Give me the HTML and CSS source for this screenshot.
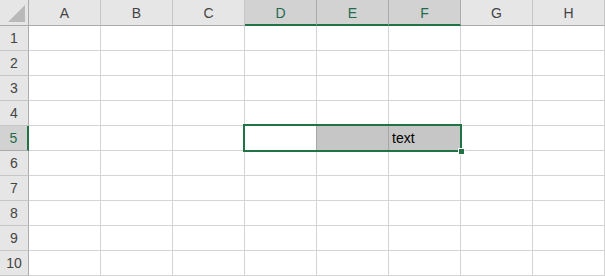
FILE: index.html
```html
<!DOCTYPE html>
<html>
  <head>
    <meta charset="UTF-8">
    <title>Sheet1</title>
    <link rel="stylesheet" href="styles.css">
  </head>
  <body>
    <div class="sheet">
      <div class="grid">
        <div class="corner"><span class="tri"></span></div>
        <div class="col-head">A</div>
        <div class="col-head">B</div>
        <div class="col-head">C</div>
        <div class="col-head sel">D</div>
        <div class="col-head sel">E</div>
        <div class="col-head sel">F</div>
        <div class="col-head">G</div>
        <div class="col-head">H</div>

        <div class="row-head">1</div>
        <div class="cell"></div><div class="cell"></div><div class="cell"></div><div class="cell"></div>
        <div class="cell"></div><div class="cell"></div><div class="cell"></div><div class="cell"></div>

        <div class="row-head">2</div>
        <div class="cell"></div><div class="cell"></div><div class="cell"></div><div class="cell"></div>
        <div class="cell"></div><div class="cell"></div><div class="cell"></div><div class="cell"></div>

        <div class="row-head">3</div>
        <div class="cell"></div><div class="cell"></div><div class="cell"></div><div class="cell"></div>
        <div class="cell"></div><div class="cell"></div><div class="cell"></div><div class="cell"></div>

        <div class="row-head">4</div>
        <div class="cell"></div><div class="cell"></div><div class="cell"></div><div class="cell"></div>
        <div class="cell"></div><div class="cell"></div><div class="cell"></div><div class="cell"></div>

        <!-- selected row: D5 active, E5:F5 filled -->
        <div class="row-head sel">5</div>
        <div class="cell"></div><div class="cell"></div><div class="cell"></div><div class="cell edge"></div>
        <div class="cell fill"></div><div class="cell fill">text</div><div class="cell"></div><div class="cell"></div>

        <div class="row-head">6</div>
        <div class="cell"></div><div class="cell"></div><div class="cell"></div><div class="cell"></div>
        <div class="cell"></div><div class="cell"></div><div class="cell"></div><div class="cell"></div>

        <div class="row-head">7</div>
        <div class="cell"></div><div class="cell"></div><div class="cell"></div><div class="cell"></div>
        <div class="cell"></div><div class="cell"></div><div class="cell"></div><div class="cell"></div>

        <div class="row-head">8</div>
        <div class="cell"></div><div class="cell"></div><div class="cell"></div><div class="cell"></div>
        <div class="cell"></div><div class="cell"></div><div class="cell"></div><div class="cell"></div>

        <div class="row-head">9</div>
        <div class="cell"></div><div class="cell"></div><div class="cell"></div><div class="cell"></div>
        <div class="cell"></div><div class="cell"></div><div class="cell"></div><div class="cell"></div>

        <div class="row-head">10</div>
        <div class="cell"></div><div class="cell"></div><div class="cell"></div><div class="cell"></div>
        <div class="cell"></div><div class="cell"></div><div class="cell"></div><div class="cell"></div>
      </div>
      <div class="selection"><span class="handle"></span></div>
    </div>
  </body>
</html>
```

FILE: styles.css
```css
body {
  margin: 0;
  background-color: #fff;
  font-family: "Liberation Sans", Arial, sans-serif;
  font-size: 14px;
  color: #333;
}
.sheet {
  position: relative;
  width: 605px;
  height: 276px;
  overflow: hidden;
}
.grid {
  display: grid;
  grid-template-columns: 29px repeat(8, 72px);
  grid-template-rows: 26px repeat(10, 25px);
}
.grid > div {
  box-sizing: border-box;
}
.corner {
  background-color: #e6e6e6;
  border-right: 1px solid #ababab;
  border-bottom: 1px solid #ababab;
  position: relative;
}
.tri {
  position: absolute;
  left: 8px;
  top: 5px;
  width: 0;
  height: 0;
  border-left: 17px solid transparent;
  border-bottom: 17px solid #b9b9b9;
}
.col-head {
  background-color: #e6e6e6;
  border-right: 1px solid #c6c6c6;
  border-bottom: 1px solid #ababab;
  display: flex;
  align-items: center;
  justify-content: center;
  color: #444;
}
.col-head.sel {
  background-color: #d2d2d2;
  border-right-color: #ababab;
  border-bottom: 2px solid #217346;
  padding-top: 1px;
  color: #1f6b4d;
}
.row-head {
  background-color: #e6e6e6;
  border-right: 1px solid #ababab;
  border-bottom: 1px solid #c6c6c6;
  display: flex;
  align-items: center;
  justify-content: center;
  color: #444;
}
.row-head.sel {
  background-color: #d2d2d2;
  border-right: 2px solid #217346;
  border-bottom-color: #ababab;
  color: #1f6b4d;
}
.cell {
  border-right: 1px solid #d4d4d4;
  border-bottom: 1px solid #d4d4d4;
  display: flex;
  align-items: center;
  padding-left: 3px;
  color: #000;
}
.cell.edge {
  border-right-color: #a6a6a6;
}
.cell.fill {
  background-color: #c6c6c6;
  border-right-color: #a6a6a6;
}
.selection {
  position: absolute;
  left: 243px;
  top: 124px;
  width: 219px;
  height: 28px;
  box-sizing: border-box;
  border: 2px solid #217346;
}
.handle {
  position: absolute;
  right: -5px;
  bottom: -5px;
  width: 5px;
  height: 5px;
  background-color: #217346;
  border: 1px solid #fff;
}
```
